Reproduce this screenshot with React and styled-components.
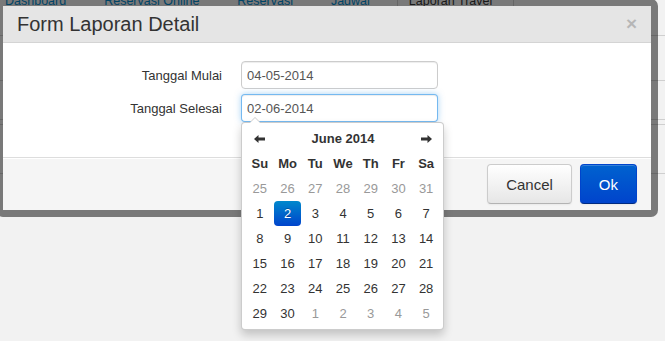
import React from 'react';
import styled, { createGlobalStyle } from 'styled-components';

const navItems = [
  { label: 'Dashboard' },
  { label: 'Reservasi Online' },
  { label: 'Reservasi' },
  { label: 'Jadwal' },
  { label: 'Laporan Travel', active: true }
];

// heights of the table rows of the page behind the modal
const pageRows = [26, 45, 39, 5, 49];

const weekDays = ['Su', 'Mo', 'Tu', 'We', 'Th', 'Fr', 'Sa'];

const buildDays = () => {
  let days = [];
  for (let d = 25; d <= 31; d++) days.push({ n: d, muted: true });
  for (let d = 1; d <= 30; d++) days.push({ n: d, selected: d === 2 });
  for (let d = 1; d <= 5; d++) days.push({ n: d, muted: true });
  return days;
};

const ArrowLeft = () => (
  <svg width="11" height="8" viewBox="0 0 11 8">
    <path d="M0 4 L4.5 0 L4.5 2.6 L11 2.6 L11 5.4 L4.5 5.4 L4.5 8 Z" fill="#333"/>
  </svg>
);

const ArrowRight = () => (
  <svg width="11" height="8" viewBox="0 0 11 8">
    <path d="M11 4 L6.5 0 L6.5 2.6 L0 2.6 L0 5.4 L6.5 5.4 L6.5 8 Z" fill="#333"/>
  </svg>
);

export default function App() {
  const days = buildDays();

  return (
    <Page>
      <GlobalStyle/>
      <NavBar>
        {navItems.map(item => (
          <NavItem key={item.label} active={item.active}>{item.label}</NavItem>
        ))}
      </NavBar>
      <PageTable>
        {pageRows.map((h, i) => <PageRow key={i} h={h}/>)}
      </PageTable>

      <Modal>
        <ModalHeader>
          <Title>Form Laporan Detail</Title>
          <Close>×</Close>
        </ModalHeader>

        <ModalBody>
          <FormGrid>
            <Label>Tanggal Mulai</Label>
            <DateField>
              <Input readOnly value="04-05-2014"/>
            </DateField>

            <Label>Tanggal Selesai</Label>
            <DateField>
              <Input readOnly value="02-06-2014" focused/>
              <Picker>
                <PickerGrid>
                  <NavCell><ArrowLeft/></NavCell>
                  <MonthCell>June 2014</MonthCell>
                  <NavCell><ArrowRight/></NavCell>
                  {weekDays.map(d => <DowCell key={d}>{d}</DowCell>)}
                  {days.map((d, i) => (
                    <DayCell key={i} muted={d.muted} selected={d.selected}>{d.n}</DayCell>
                  ))}
                </PickerGrid>
              </Picker>
            </DateField>
          </FormGrid>
        </ModalBody>

        <ModalFooter>
          <Button>Cancel</Button>
          <Button primary>Ok</Button>
        </ModalFooter>
      </Modal>
    </Page>
  );
}

//Style

const GlobalStyle = createGlobalStyle`
  html, body {
    margin: 0;
    padding: 0;
  }
  body {
    background: #f2f2f2;
    font-family: "Liberation Sans", Arial, sans-serif;
    color: #333;
    overflow: hidden;
  }
`;

const Page = styled.div`
  position: relative;
  width: 665px;
  height: 341px;
  overflow: hidden;
`;

const NavBar = styled.div`
  display: flex;
  gap: 38px;
  height: 18px;
  margin-top: -8px;
  padding-left: 5px;
`;

const NavItem = styled.div`
  font-size: 12.5px;
  line-height: 18px;
  white-space: nowrap;
  color: ${props => props.active ? '#333' : '#0088cc'};
  ${props => props.active && `
    margin-left: -11px;
    padding: 0 21px 0 11px;
    border-left: 1px solid #ccc;
    border-right: 1px solid #ccc;
  `}
`;

const PageTable = styled.div`
  display: flex;
  flex-direction: column;
`;

const PageRow = styled.div`
  height: ${props => props.h}px;
  box-sizing: border-box;
  border-bottom: 1px solid #cfcfcf;
`;

const Modal = styled.div`
  position: absolute;
  left: -4px;
  top: -1px;
  width: 662px;
  box-sizing: border-box;
  border: 7px solid rgba(0, 0, 0, 0.5);
  border-radius: 7px;
  background: #fff;
  background-clip: padding-box;
  z-index: 10;
`;

const ModalHeader = styled.div`
  display: flex;
  align-items: center;
  justify-content: space-between;
  height: 36px;
  padding: 0 14px;
  background: #e5e5e5;
  border-bottom: 1px solid #d4d4d4;
`;

const Title = styled.h3`
  margin: 0;
  font-size: 20px;
  font-weight: normal;
  line-height: 36px;
  color: #333;
`;

const Close = styled.span`
  font-size: 19px;
  font-weight: bold;
  line-height: 20px;
  color: #000;
  opacity: 0.2;
`;

const ModalBody = styled.div`
  padding: 18px 0 35px;
`;

const FormGrid = styled.div`
  display: grid;
  grid-template-columns: 219px 197px;
  column-gap: 19px;
  row-gap: 5px;
  align-items: center;
`;

const Label = styled.label`
  text-align: right;
  font-size: 13px;
  color: #333;
`;

const DateField = styled.div`
  position: relative;
`;

const Input = styled.input`
  display: block;
  width: 100%;
  height: 28px;
  box-sizing: border-box;
  margin: 0;
  padding: 0 5px;
  font-family: "Liberation Sans", Arial, sans-serif;
  font-size: 13px;
  color: #555;
  background: #fff;
  border: 1px solid ${props => props.focused ? 'rgba(82, 168, 236, 0.8)' : '#ccc'};
  border-radius: 4px;
  outline: none;
  box-shadow: ${props => props.focused
    ? 'inset 0 1px 1px rgba(0,0,0,.075), 0 0 6px rgba(82,168,236,.5)'
    : 'inset 0 1px 1px rgba(0,0,0,.075)'};
`;

const Picker = styled.div`
  position: absolute;
  top: 100%;
  left: 0;
  width: 203px;
  box-sizing: border-box;
  padding: 3px 3px 3px 4px;
  background: #fff;
  border: 1px solid rgba(0, 0, 0, 0.2);
  border-radius: 4px;
  box-shadow: 0 5px 10px rgba(0, 0, 0, 0.2);
  z-index: 20;

  &:before {
    content: '';
    position: absolute;
    top: -6px;
    left: 7px;
    border-left: 6px solid transparent;
    border-right: 6px solid transparent;
    border-bottom: 6px solid #ccc;
  }
  &:after {
    content: '';
    position: absolute;
    top: -5px;
    left: 8px;
    border-left: 5px solid transparent;
    border-right: 5px solid transparent;
    border-bottom: 5px solid #fff;
  }
`;

const PickerGrid = styled.div`
  display: grid;
  grid-template-columns: repeat(7, 1fr);
  grid-auto-rows: 25px;
`;

const Cell = styled.div`
  display: flex;
  align-items: center;
  justify-content: center;
  font-size: 13px;
`;

const NavCell = styled(Cell)`
  padding-top: 1px;
`;

const MonthCell = styled(Cell)`
  grid-column: span 5;
  font-weight: bold;
  color: #333;
`;

const DowCell = styled(Cell)`
  font-weight: bold;
  color: #333;
`;

const DayCell = styled(Cell)`
  color: ${props => props.selected ? '#fff' : props.muted ? '#999' : '#333'};
  border-radius: 4px;
  ${props => props.selected && `
    background: linear-gradient(to bottom, #0088cc, #0044cc);
    text-shadow: 0 -1px 0 rgba(0,0,0,.25);
  `}
`;

const ModalFooter = styled.div`
  display: flex;
  justify-content: flex-end;
  gap: 8px;
  padding: 6px 14px;
  background: #f5f5f5;
  border-top: 1px solid #ddd;
  box-shadow: inset 0 1px 0 #fff;
`;

const Button = styled.button`
  height: 40px;
  padding: 0 18px;
  margin: 0;
  font-family: "Liberation Sans", Arial, sans-serif;
  font-size: 15px;
  border-radius: 4px;
  cursor: pointer;
  color: ${props => props.primary ? '#fff' : '#333'};
  background: ${props => props.primary
    ? 'linear-gradient(to bottom, #0062cf, #0044cc)'
    : 'linear-gradient(to bottom, #ffffff, #e6e6e6)'};
  border: 1px solid ${props => props.primary ? '#0044cc' : '#ccc'};
  border-bottom-color: ${props => props.primary ? '#002a80' : '#b3b3b3'};
  box-shadow: inset 0 1px 0 rgba(255,255,255,.2), 0 1px 2px rgba(0,0,0,.05);
`;
